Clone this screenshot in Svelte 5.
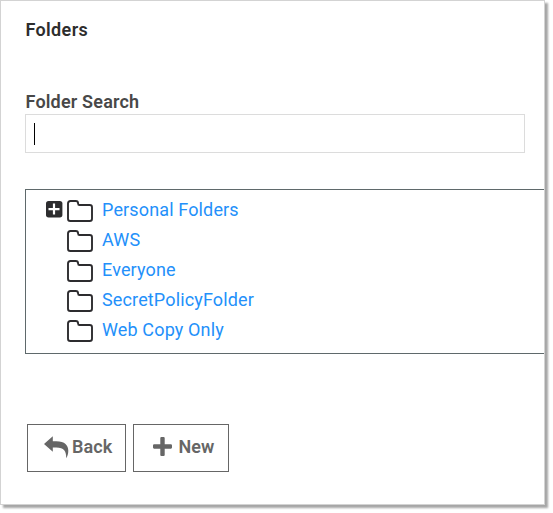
<script>
  const folders = [
    { name: 'Personal Folders', expandable: true },
    { name: 'AWS' },
    { name: 'Everyone' },
    { name: 'SecretPolicyFolder' },
    { name: 'Web Copy Only' }
  ];
</script>

<main class="panel">
  <h1>Folders</h1>
  <div class="label">Folder Search</div>
  <div class="search"><span class="caret"></span></div>

  <div class="tree">
    {#each folders as folder}
      <div class="row">
        <span class="toggle">
          {#if folder.expandable}
            <svg width="17" height="17" viewBox="0 0 17 17">
              <rect x="0" y="0" width="16.4" height="16.4" rx="2.6" fill="#2d2d2f" />
              <path d="M8 2.6v11M2.5 8.1h11" stroke="#fff" stroke-width="2.2" />
            </svg>
          {/if}
        </span>
        <svg class="folder" width="26" height="22" viewBox="0 0 26 22">
          <path
            d="M1 3.5Q1 1 3.5 1H8.7Q11.1 1 11.1 3.4Q11.1 5 12.5 5H22.7Q25 5 25 7.3V18.7Q25 21 22.7 21H3.3Q1 21 1 18.7Z"
            fill="none" stroke="#2d2c2f" stroke-width="1.9" />
        </svg>
        <span class="name">{folder.name}</span>
      </div>
    {/each}
  </div>

  <div class="actions">
    <button class="back">
      <svg width="25" height="23" viewBox="0 0 25 23">
        <path d="M0 8.1L8.8 0.3V5.2H12.2C21 5.2 24.3 9.3 24.3 14.8C24.3 17.8 23.4 20.4 22.2 22.2C22.4 15.2 20.1 11.4 12.2 11.4H8.8V15.7Z" fill="#666" />
      </svg>
      <span>Back</span>
    </button>
    <button class="new">
      <svg width="19" height="19" viewBox="0 0 19 19">
        <path d="M8.4 0h2.2q1.1 0 1.1 1.1V7.3h6.2q1.1 0 1.1 1.1v2.2q0 1.1-1.1 1.1H11.7v6.2q0 1.1-1.1 1.1H8.4q-1.1 0-1.1-1.1V11.7H1.1q-1.1 0-1.1-1.1V8.4q0-1.1 1.1-1.1h6.2V1.1q0-1.1 1.1-1.1Z" fill="#666" />
      </svg>
      <span>New</span>
    </button>
  </div>
</main>

<style>
  :global(body) {
    height: 513px;
    background: #fff;
  }
  .panel {
    box-sizing: border-box;
    width: 545px;
    height: 505px;
    border: 1px solid #d3d3d3;
    box-shadow: 3px 3px 2px #a6a6a6;
    background: #fff;
    padding: 18px 0 0 24px;
    font: 18px/22px Roboto, sans-serif;
    color: #484848;
  }
  h1 {
    margin: 0;
    height: 22px;
    padding-left: 0.5px;
    font-size: 18px;
    line-height: 22px;
    font-weight: 600;
    letter-spacing: 0.35px;
    color: #2d2d2d;
  }
  .label {
    margin-top: 50px;
    height: 23px;
    padding-left: 0.5px;
    line-height: 22px;
    font-weight: 600;
    letter-spacing: 0.18px;
  }
  .search {
    box-sizing: border-box;
    width: 500px;
    height: 39px;
    border: 1px solid #dcdcdc;
    padding: 8px;
  }
  .caret {
    display: block;
    width: 1px;
    height: 22px;
    background: #000;
  }
  .tree {
    box-sizing: border-box;
    margin-top: 36px;
    height: 165px;
    border: 1px solid #5f696b;
    border-right: 0;
    padding: 5px 0 0 20px;
  }
  .row {
    display: flex;
    align-items: flex-start;
    height: 30px;
  }
  .toggle {
    width: 21px;
    padding-top: 6px;
    height: 17px;
  }
  .row svg {
    display: block;
  }
  .folder {
    margin-top: 5px;
  }
  .name {
    margin-left: 9px;
    line-height: 30px;
    letter-spacing: 0.14px;
    color: #2390fa;
    white-space: nowrap;
  }
  .actions {
    display: flex;
    gap: 7px;
    margin: 70px 0 0 2px;
  }
  button {
    box-sizing: border-box;
    display: flex;
    align-items: flex-start;
    height: 48px;
    border: 1px solid #666;
    background: #fff;
    padding: 0;
    font: 600 18px/22px Roboto, sans-serif;
    color: #666;
  }
  .back {
    width: 99px;
  }
  .new {
    width: 96px;
  }
  button span {
    margin-top: 11px;
    letter-spacing: 0.1px;
  }
  .back svg {
    margin: 11px 3px 0 16px;
  }
  .new svg {
    margin: 12px 6.5px 0 19px;
  }
</style>
